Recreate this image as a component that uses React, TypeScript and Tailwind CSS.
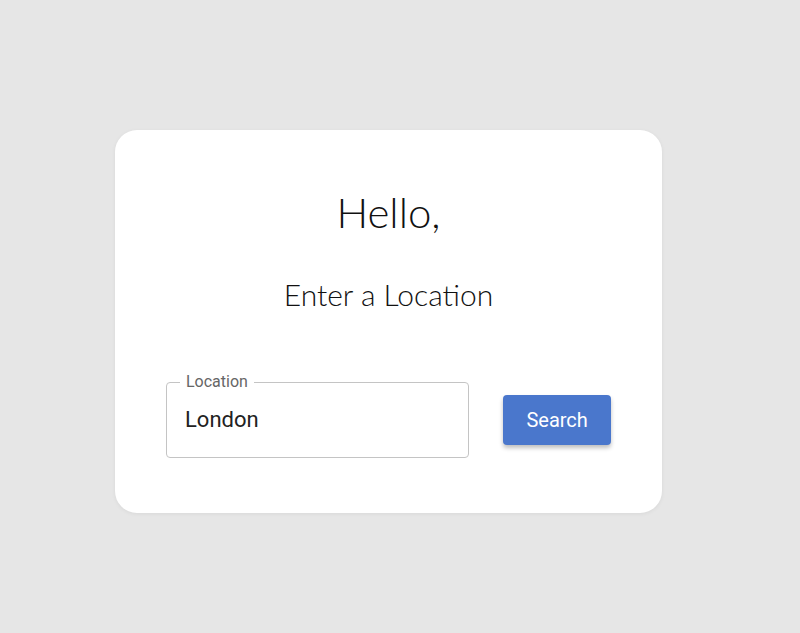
export default function App() {
  return (
    <div className="min-h-[633px] w-full bg-[#e6e6e6] pt-[130px] pl-[115px]">
      <div className="w-[547px] h-[383px] rounded-[22px] bg-white shadow-[0_1px_4px_rgba(0,0,0,0.06)] flex flex-col items-center">
        <h1 className="mt-[58px] text-[42px] leading-[48px] font-light text-[#111]" style={{ fontFamily: "Lato, 'Noto Sans', sans-serif" }}>
          Hello,
        </h1>
        <p className="mt-[41px] text-[30px] leading-[34px] font-light text-[#111]" style={{ fontFamily: "Lato, 'Noto Sans', sans-serif" }}>
          Enter a Location
        </p>
        <div className="mt-[71px] w-full px-[51px] flex items-center gap-[34px]" style={{ fontFamily: "Roboto, 'Liberation Sans', sans-serif" }}>
          <div className="relative w-[304px] h-[76px] rounded-[4px] border border-[#c4c4c4]">
            <span className="absolute -top-[9px] left-[13px] px-[6px] bg-white text-[16px] leading-[16px] text-[#666]">
              Location
            </span>
            <div className="pl-[18px] pt-[24px] text-[22px] leading-[26px] text-[#222]">London</div>
          </div>
          <button className="-mt-[1px] w-[108px] h-[50px] rounded-[4px] bg-[#4a77cc] text-white text-[20px] shadow-[0_3px_4px_rgba(0,0,0,0.25)]">
            Search
          </button>
        </div>
      </div>
    </div>
  );
}
